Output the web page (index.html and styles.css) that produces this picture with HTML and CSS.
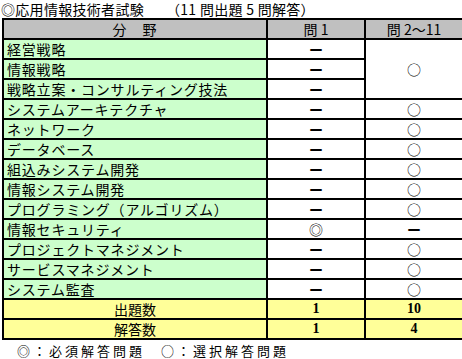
FILE: index.html
```html
<!DOCTYPE html>
<html lang="ja">
<head>
    <meta charset="UTF-8">
    <title>応用情報技術者試験 午後問題</title>
    <link rel="stylesheet" href="styles.css">
</head>
<body>
    <p class="title">◎応用情報技術者試験<span class="title-sub">（11 問出題 5 問解答）</span></p>

    <table class="exam">
        <colgroup>
            <col class="col-field">
            <col class="col-q1">
            <col class="col-q2">
        </colgroup>
        <thead>
            <tr>
                <th class="field-head">分　野</th>
                <th>問 1</th>
                <th>問 2～11</th>
            </tr>
        </thead>
        <tbody>
            <tr>
                <td class="field">経営戦略</td>
                <td class="mark dash">ー</td>
                <td class="mark" rowspan="3">○</td>
            </tr>
            <tr>
                <td class="field">情報戦略</td>
                <td class="mark dash">ー</td>
            </tr>
            <tr>
                <td class="field">戦略立案・コンサルティング技法</td>
                <td class="mark dash">ー</td>
            </tr>
            <tr>
                <td class="field">システムアーキテクチャ</td>
                <td class="mark dash">ー</td>
                <td class="mark">○</td>
            </tr>
            <tr>
                <td class="field">ネットワーク</td>
                <td class="mark dash">ー</td>
                <td class="mark">○</td>
            </tr>
            <tr>
                <td class="field">データベース</td>
                <td class="mark dash">ー</td>
                <td class="mark">○</td>
            </tr>
            <tr>
                <td class="field">組込みシステム開発</td>
                <td class="mark dash">ー</td>
                <td class="mark">○</td>
            </tr>
            <tr>
                <td class="field">情報システム開発</td>
                <td class="mark dash">ー</td>
                <td class="mark">○</td>
            </tr>
            <tr>
                <td class="field">プログラミング（アルゴリズム）</td>
                <td class="mark dash">ー</td>
                <td class="mark">○</td>
            </tr>
            <tr>
                <td class="field">情報セキュリティ</td>
                <td class="mark">◎</td>
                <td class="mark dash">ー</td>
            </tr>
            <tr>
                <td class="field">プロジェクトマネジメント</td>
                <td class="mark dash">ー</td>
                <td class="mark">○</td>
            </tr>
            <tr>
                <td class="field">サービスマネジメント</td>
                <td class="mark dash">ー</td>
                <td class="mark">○</td>
            </tr>
            <tr>
                <td class="field">システム監査</td>
                <td class="mark dash">ー</td>
                <td class="mark">○</td>
            </tr>
        </tbody>
        <tfoot>
            <tr class="total">
                <td class="total-label">出題数</td>
                <td class="num">1</td>
                <td class="num">10</td>
            </tr>
            <tr class="total">
                <td class="total-label">解答数</td>
                <td class="num">1</td>
                <td class="num">4</td>
            </tr>
        </tfoot>
    </table>

    <p class="legend">◎：必須解答問題　○：選択解答問題</p>
</body>
</html>
```

FILE: styles.css
```css
* {
    box-sizing: border-box;
}
body {
    margin: 0;
    font-family: "Noto Sans CJK JP", sans-serif;
    color: #000;
    background: #fff;
}
.title {
    margin: 0;
    padding-left: 1px;
    font-size: 14px;
    line-height: 18px;
    letter-spacing: 0.3px;
    white-space: nowrap;
}
.title-sub {
    margin-left: 22px;
}
.exam {
    margin-left: 2px;
    width: 460px;
    table-layout: fixed;
    border-collapse: collapse;
}
.col-field {
    width: 264px;
}
.col-q1 {
    width: 98px;
}
.col-q2 {
    width: 98px;
}
.exam th,
.exam td {
    height: 18px;
    padding: 0;
    border: 2px solid #000;
    font-size: 14px;
    line-height: 18px;
    font-weight: normal;
    text-align: center;
    white-space: nowrap;
}
.exam th {
    background: #c0c0c0;
}
.exam .field-head {
    letter-spacing: 1px;
}
.exam .field {
    padding-left: 3px;
    text-align: left;
    letter-spacing: 0.8px;
    background: #ccffcc;
}
.exam .mark {
    background: #fff;
}
.exam .dash {
    font-weight: bold;
}
.total td {
    background: #ffff99;
}
.exam .num {
    font-family: "Liberation Serif", serif;
    font-weight: bold;
}
.legend {
    margin: 3px 0 0 17px;
    font-size: 13px;
    line-height: 16px;
    letter-spacing: 3px;
}
```
